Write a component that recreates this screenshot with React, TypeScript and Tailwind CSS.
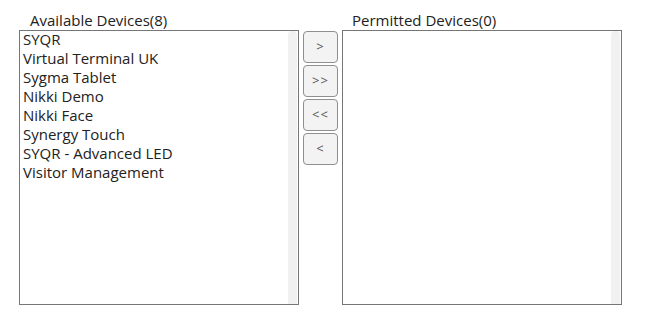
import React from 'react';

const available = [
  'SYQR',
  'Virtual Terminal UK',
  'Sygma Tablet',
  'Nikki Demo',
  'Nikki Face',
  'Synergy Touch',
  'SYQR - Advanced LED',
  'Visitor Management',
];

function ListBox({ items }: { items: string[] }) {
  return (
    <div className="flex h-[275px] w-[280px] border border-[#767676] bg-white">
      <div className="flex-1 pl-[3px] -mt-[1px]">
        {items.map((item) => (
          <div key={item} className="h-[19px] text-[15px] leading-[19px] text-[#222]">
            {item}
          </div>
        ))}
      </div>
      <div className="mr-[1px] w-[9px] rounded-t-[4px] bg-[#f1f1f1]" />
    </div>
  );
}

function MoveButton({ label }: { label: string }) {
  return (
    <button className="flex h-[32px] w-[35px] items-center justify-center rounded-[4px] border border-[#8f8f8f] bg-[#f3f3f3] text-[13px] tracking-[1px] text-[#555]">
      {label}
    </button>
  );
}

export default function App() {
  return (
    <div className="h-[315px] w-[666px] bg-white pl-[19px] pt-[11px]" style={{ fontFamily: '"Open Sans", sans-serif' }}>
      <div className="flex items-start">
        <div className="flex flex-col">
          <div className="h-[19px] pl-[11px] text-[15px] leading-[19px] text-[#222]">Available Devices(8)</div>
          <ListBox items={available} />
        </div>
        <div className="mx-[4px] mt-[20px] flex flex-col gap-[2px]">
          <MoveButton label=">" />
          <MoveButton label=">>" />
          <MoveButton label="<<" />
          <MoveButton label="<" />
        </div>
        <div className="flex flex-col">
          <div className="h-[19px] pl-[10px] text-[15px] leading-[19px] text-[#222]">Permitted Devices(0)</div>
          <ListBox items={[]} />
        </div>
      </div>
    </div>
  );
}
